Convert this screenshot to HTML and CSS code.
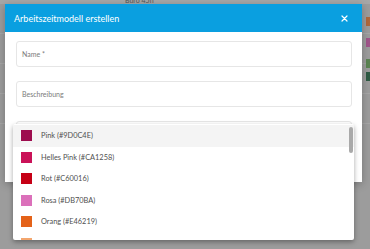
FILE: index.html
```html
<!DOCTYPE html>
<html lang="de">

<head>
    <meta charset="UTF-8">
    <meta name="viewport" content="width=device-width, initial-scale=1.0">
    <title>Arbeitszeitmodell erstellen</title>
    <link rel="stylesheet" href="styles.css">
</head>

<body>

    <!-- App behind the dialog (dimmed) -->
    <div class="app">
        <div class="topbar"><span class="topbar-label">Büro 45h</span></div>
        <div class="rows">
            <div class="row"></div>
            <div class="row"></div>
            <div class="row"></div>
            <div class="row"></div>
        </div>
        <div class="side">
            <div class="tag tag-orange"></div>
            <div class="tag tag-pink"></div>
            <div class="tag tag-green"></div>
            <div class="tag tag-dark"></div>
        </div>
    </div>

    <!-- Dialog -->
    <div class="dialog">
        <div class="dialog-header">
            <span class="dialog-title">Arbeitszeitmodell erstellen</span>
            <svg class="close" width="7" height="7" viewBox="0 0 7 7">
                <path d="M1 1 L6 6 M6 1 L1 6" stroke="#fff" stroke-width="1.2" stroke-linecap="round" />
            </svg>
        </div>
        <div class="dialog-body">
            <div class="field"><span class="field-label">Name *</span></div>
            <div class="field"><span class="field-label">Beschreibung</span></div>
            <div class="field"></div>
        </div>
    </div>

    <!-- Colour dropdown -->
    <div class="dropdown">
        <div class="option active"><span class="swatch" style="background:#9D0C4E"></span>Pink (#9D0C4E)</div>
        <div class="option"><span class="swatch" style="background:#CA1258"></span>Helles Pink (#CA1258)</div>
        <div class="option"><span class="swatch" style="background:#C60016"></span>Rot (#C60016)</div>
        <div class="option"><span class="swatch" style="background:#DB70BA"></span>Rosa (#DB70BA)</div>
        <div class="option"><span class="swatch" style="background:#E46219"></span>Orang (#E46219)</div>
        <div class="option"><span class="swatch" style="background:#F3A66E"></span>Hellorange (#F3A66E)</div>
        <div class="scrollbar"></div>
    </div>

</body>

</html>
```

FILE: styles.css
```css
body {
    margin: 0;
    width: 370px;
    height: 249px;
    overflow: hidden;
    background-color: #9c9c9c;
    font-family: Lato, "Open Sans", sans-serif;
    position: relative;
}

.app {
    height: 249px;
    display: flex;
    flex-direction: column;
    position: relative;
}

.topbar {
    height: 4px;
    background-color: #a7a7a7;
    overflow: hidden;
    padding-left: 125px;
}

.topbar-label {
    display: block;
    font-size: 7px;
    line-height: 7px;
    margin-top: -3px;
    color: #555;
}

.rows {
    flex: 1;
}

.row {
    height: 29px;
    border-bottom: 1px solid #a6a6a6;
}

.side {
    position: absolute;
    right: 0;
    top: 17px;
    width: 4px;
    display: flex;
    flex-direction: column;
    gap: 12px;
}

.tag {
    height: 9px;
}

.tag-orange { background-color: #b0683c; }
.tag-pink { background-color: #a0558a; }
.tag-green { background-color: #5b8452; }
.tag-dark { background-color: #2f5b44; margin-top: -8px; }

.dialog {
    position: absolute;
    left: 5px;
    top: 4px;
    width: 357px;
    height: 178px;
    background-color: #fff;
    box-shadow: 0 2px 8px rgba(0, 0, 0, 0.25);
}

.dialog-header {
    height: 28px;
    background-color: #0a9fe0;
    display: flex;
    align-items: center;
    justify-content: space-between;
    padding: 0 14px 0 9px;
}

.dialog-title {
    color: #fff;
    font-size: 9px;
}

.dialog-body {
    padding: 9px 10px 0 11px;
    display: flex;
    flex-direction: column;
    gap: 14px;
}

.field {
    height: 24px;
    border: 1px solid #e6e6e6;
    border-radius: 3px;
    display: flex;
    align-items: center;
    padding-left: 5px;
}

.field-label {
    font-size: 7px;
    color: #7a7a7a;
}

.dropdown {
    position: absolute;
    left: 13px;
    top: 124px;
    width: 341px;
    height: 116px;
    padding-top: 1px;
    box-sizing: border-box;
    overflow: hidden;
    background-color: #fff;
    border-radius: 2px;
    box-shadow: 0 2px 5px rgba(0, 0, 0, 0.35);
}

.option {
    height: 21.5px;
    display: flex;
    align-items: center;
    padding-left: 8px;
    font-size: 7.4px;
    color: #505050;
}

.option.active {
    background-color: #f4f4f4;
}

.swatch {
    width: 11px;
    height: 11px;
    margin-right: 9px;
}

.scrollbar {
    position: absolute;
    right: 1px;
    top: 3px;
    width: 4px;
    height: 26px;
    border-radius: 2px;
    background-color: #a9a9a9;
}
```
